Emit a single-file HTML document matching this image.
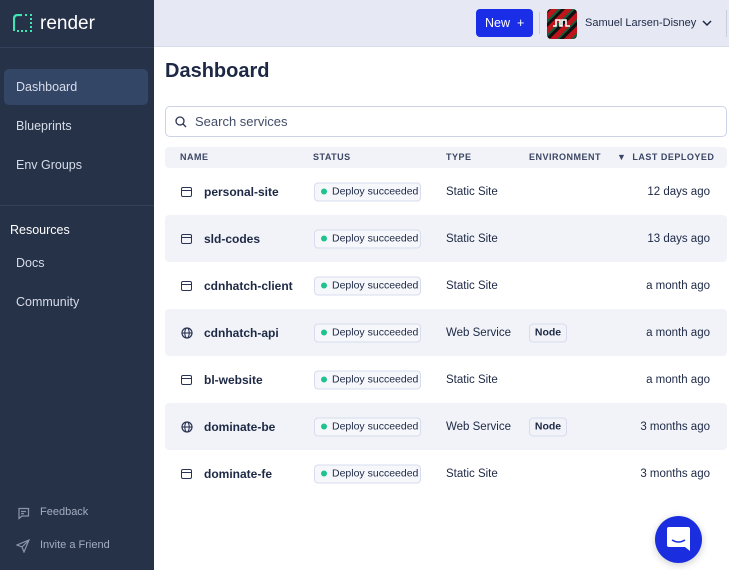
<!DOCTYPE html><html><head><style>
*{margin:0;padding:0;box-sizing:border-box}
body{width:729px;height:570px;overflow:hidden;font-family:"Liberation Sans",sans-serif;background:#fff;position:relative;color:#1d2845}
.sb{position:absolute;left:0;top:0;width:154px;height:570px;background:#263247;color:#d7dcea;font-size:12.5px}
.sb .it{position:absolute;left:16px}
.hd{position:absolute;left:154px;top:0;right:0;height:47px;background:#e6e9f4;border-bottom:1px solid #d9ddea}
.row{position:absolute;left:165px;width:562px;height:47px;font-size:11.5px;white-space:nowrap}
.row.g{background:#f1f3f8;border-radius:4px}
.row>*{position:absolute;top:50%;transform:translateY(-50%)}
.nm{left:39px;font-weight:bold;font-size:12px}
.ic{left:16px;width:11px;height:10px;border:1.5px solid #2a3352;border-radius:2px}
.ic:after{content:"";position:absolute;left:0;right:0;top:2px;border-top:1.5px solid #2a3352}
.bd{left:149px;width:107px;height:19px;border:1.5px solid #d7dcee;border-radius:4px;background:#f6f7fb;font-size:10.5px;padding-left:17px;line-height:16px;white-space:nowrap}
.bd:before{content:"";position:absolute;left:6px;top:5px;width:6px;height:6px;border-radius:50%;background:#1fc38d}
.tp{left:281px}
.nd{left:364px;width:38px;height:19px;border:1.5px solid #d7dcee;border-radius:4px;font-size:10.5px;font-weight:bold;text-align:center;line-height:16px}
.ld{right:17px}
.th{position:absolute;top:147px;left:165px;width:562px;height:21px;background:#f1f3f8;border-radius:4px;font-size:9px;font-weight:bold;letter-spacing:.5px;color:#3c4664;white-space:nowrap}
.th span{position:absolute;top:5px}
</style></head><body>
<div class="sb">
<svg style="position:absolute;left:13px;top:14px" width="20" height="18"><path d="M1 17V5Q1 1 5 1H9" stroke="#3ee6b4" stroke-width="2.2" fill="none"/><g fill="#3ee6b4"><rect x="12" y="0" width="2" height="2"/><rect x="17" y="0" width="2" height="2"/><rect x="17" y="4" width="2" height="2"/><rect x="17" y="8" width="2" height="2"/><rect x="17" y="12" width="2" height="2"/><rect x="17" y="16" width="2" height="2"/><rect x="4" y="16" width="2" height="2"/><rect x="8" y="16" width="2" height="2"/><rect x="12" y="16" width="2" height="2"/></g></svg>
<div style="position:absolute;left:40px;top:13px;font-size:19px;color:#fff">render</div>
<div style="position:absolute;left:0;top:47px;width:154px;border-top:1px solid #34405a"></div>
<div style="position:absolute;left:4px;top:69px;width:144px;height:36px;background:#344666;border-radius:5px"></div>
<div class="it" style="top:80px">Dashboard</div>
<div class="it" style="top:119px">Blueprints</div>
<div class="it" style="top:158px">Env Groups</div>
<div style="position:absolute;left:0;top:205px;width:154px;border-top:1px solid #34405a"></div>
<div class="it" style="left:10px;top:223px;color:#fff">Resources</div>
<div class="it" style="top:256px">Docs</div>
<div class="it" style="top:295px">Community</div>
<svg style="position:absolute;left:17px;top:507px" width="13" height="13"><path d="M1.5 1.5H11.5V9H5L2 11.5V1.5Z M4 4.5H9M4 6.7H7" stroke="#8d95ab" stroke-width="1.2" fill="none"/></svg>
<div class="it" style="left:40px;top:506px;font-size:11px;color:#a5adc2">Feedback</div>
<svg style="position:absolute;left:16px;top:539px" width="14" height="14"><path d="M13 1L1 6L6 8L8 13Z M6 8L13 1" stroke="#8d95ab" stroke-width="1.2" fill="none"/></svg>
<div class="it" style="left:40px;top:539px;font-size:11px;color:#a5adc2">Invite a Friend</div>
</div>
<div class="hd">
<div style="position:absolute;left:322px;top:9px;width:57px;height:28px;background:#1a2ee8;border-radius:4px;color:#fff;font-size:12.5px;line-height:28px;padding-left:9px">New &nbsp;+</div>
<div style="position:absolute;left:385px;top:12px;height:22px;border-left:1px solid #c9cedd"></div>
<div style="position:absolute;left:393px;top:9px;width:30px;height:30px;border-radius:4px;background:repeating-linear-gradient(135deg,#111 0 3px,#c0141b 3px 8px,#1a5c3a 8px 10px);"></div>
<svg style="position:absolute;left:399px;top:18px" width="18" height="10"><path d="M0 8H3V2H7V8H9V2H13V8H17" stroke="#fff" stroke-width="1.6" fill="none"/></svg>
<div style="position:absolute;left:431px;top:17px;font-size:11px;white-space:nowrap">Samuel Larsen-Disney</div>
<svg style="position:absolute;left:548px;top:19px" width="10" height="8"><path d="M1 2L5 6L9 2" stroke="#1d2845" stroke-width="1.5" fill="none"/></svg>
<div style="position:absolute;left:572px;top:10px;height:27px;border-left:1px solid #c9cedd"></div>
</div>
<div style="position:absolute;left:165px;top:60px;font-size:20px;font-weight:bold">Dashboard</div>
<div style="position:absolute;left:165px;top:106px;width:562px;height:31px;border:1.5px solid #cdd3e6;border-radius:5px"></div>
<svg style="position:absolute;left:175px;top:116px" width="12" height="12"><circle cx="5" cy="5" r="4" stroke="#2a3352" stroke-width="1.3" fill="none"/><path d="M8 8L11 11" stroke="#2a3352" stroke-width="1.3"/></svg>
<div style="position:absolute;left:195px;top:114px;font-size:13px;color:#424c68">Search services</div>
<div class="th"><span style="left:15px">NAME</span><span style="left:148px">STATUS</span><span style="left:281px">TYPE</span><span style="left:364px">ENVIRONMENT</span><span style="left:452px">▼ &nbsp;LAST DEPLOYED</span></div>

<div class="row" style="top:168px"><i class="ic"></i><b class="nm">personal-site</b><span class="bd">Deploy succeeded</span><span class="tp">Static Site</span><span class="ld">12 days ago</span></div>
<div class="row g" style="top:215px"><i class="ic"></i><b class="nm">sld-codes</b><span class="bd">Deploy succeeded</span><span class="tp">Static Site</span><span class="ld">13 days ago</span></div>
<div class="row" style="top:262px"><i class="ic"></i><b class="nm">cdnhatch-client</b><span class="bd">Deploy succeeded</span><span class="tp">Static Site</span><span class="ld">a month ago</span></div>
<div class="row g" style="top:309px"><svg style="left:16px" width="12" height="12"><circle cx="6" cy="6" r="5" stroke="#2a3352" stroke-width="1.2" fill="none"/><ellipse cx="6" cy="6" rx="2.2" ry="5" stroke="#2a3352" stroke-width="1.1" fill="none"/><path d="M1 6H11" stroke="#2a3352" stroke-width="1.1"/></svg><b class="nm">cdnhatch-api</b><span class="bd">Deploy succeeded</span><span class="tp">Web Service</span><span class="nd">Node</span><span class="ld">a month ago</span></div>
<div class="row" style="top:356px"><i class="ic"></i><b class="nm">bl-website</b><span class="bd">Deploy succeeded</span><span class="tp">Static Site</span><span class="ld">a month ago</span></div>
<div class="row g" style="top:403px"><svg style="left:16px" width="12" height="12"><circle cx="6" cy="6" r="5" stroke="#2a3352" stroke-width="1.2" fill="none"/><ellipse cx="6" cy="6" rx="2.2" ry="5" stroke="#2a3352" stroke-width="1.1" fill="none"/><path d="M1 6H11" stroke="#2a3352" stroke-width="1.1"/></svg><b class="nm">dominate-be</b><span class="bd">Deploy succeeded</span><span class="tp">Web Service</span><span class="nd">Node</span><span class="ld">3 months ago</span></div>
<div class="row" style="top:450px"><i class="ic"></i><b class="nm">dominate-fe</b><span class="bd">Deploy succeeded</span><span class="tp">Static Site</span><span class="ld">3 months ago</span></div>

<div style="position:absolute;left:655px;top:516px;width:47px;height:47px;border-radius:50%;background:#1a2ee0;box-shadow:0 2px 8px rgba(0,0,0,.2)"></div>
<svg style="position:absolute;left:667px;top:527px" width="23" height="25"><path d="M2 0H21Q23 0 23 2V24L18 20H2Q0 20 0 18V2Q0 0 2 0Z" fill="#fff"/><path d="M5 13Q11.5 17 18 13" stroke="#1a2ee0" stroke-width="1.6" fill="none"/></svg>
</body></html>
